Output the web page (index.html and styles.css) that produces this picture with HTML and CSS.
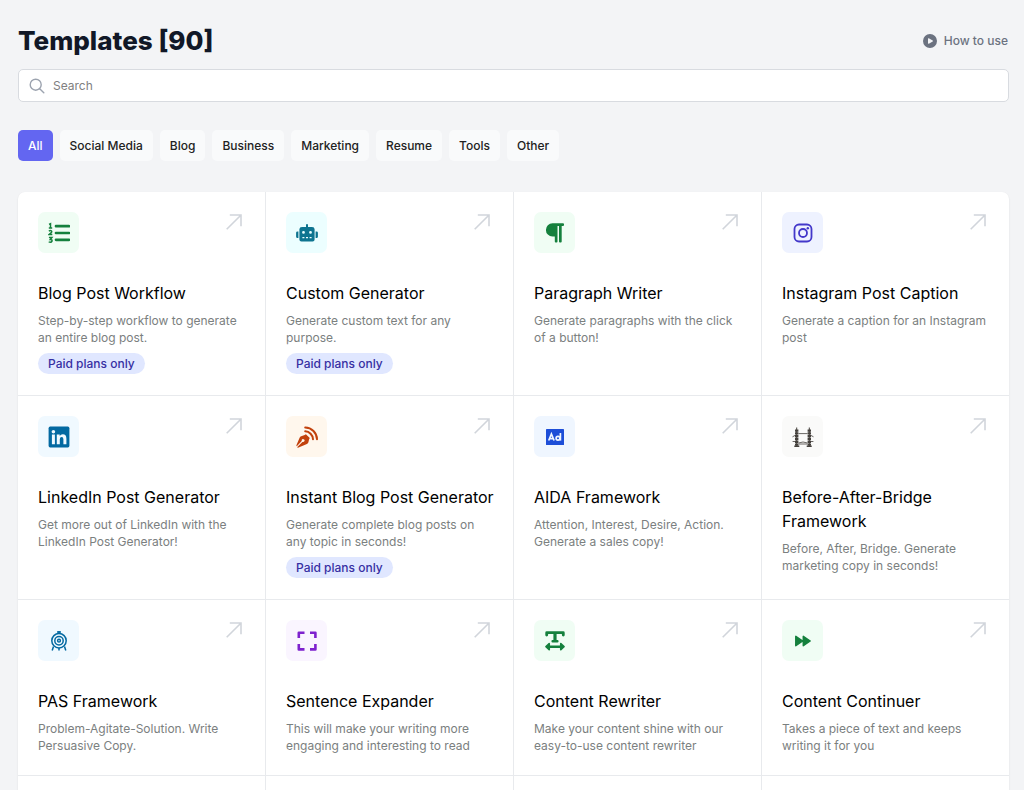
FILE: index.html
```html
<!DOCTYPE html>
<html lang="en">
<head>
<meta charset="utf-8">
<meta name="viewport" content="width=device-width, initial-scale=1">
<title>Templates</title>
<link rel="stylesheet" href="styles.css">
</head>
<body>
<svg class="defs" aria-hidden="true">
  <symbol id="arrow" viewBox="0 0 16 16"><path d="M0.7 15.3 14.8 1.2M3.8 1h11.2v11.2" fill="none" stroke="currentColor" stroke-width="1.6"/></symbol>
</svg>
<main class="page">
  <header class="header">
    <h1 class="heading">Templates [90]</h1>
    <a class="help" href="#"><svg class="help-icon" viewBox="0 0 14 14" aria-hidden="true"><path fill-rule="evenodd" fill="currentColor" d="M7 0a7 7 0 1 0 0 14A7 7 0 0 0 7 0ZM5.8 4.3 9.7 6.5q.7.5 0 1L5.8 9.7q-.8.3-.8-.6V4.9q0-.9.8-.6Z"/></svg>How to use</a>
  </header>
  <label class="search">
    <svg class="search-icon" viewBox="0 0 16 16" fill="none" stroke="currentColor" stroke-width="1.4" stroke-linecap="round" aria-hidden="true"><circle cx="6.7" cy="6.7" r="5.5"/><path d="m10.7 10.7 4.1 4.1"/></svg>
    <input class="search-input" type="search" placeholder="Search" aria-label="Search">
  </label>
  <nav class="tabs" aria-label="Categories">
    <button class="tab tab-active" type="button">All</button>
    <button class="tab" type="button">Social Media</button>
    <button class="tab" type="button">Blog</button>
    <button class="tab" type="button">Business</button>
    <button class="tab" type="button">Marketing</button>
    <button class="tab" type="button">Resume</button>
    <button class="tab" type="button">Tools</button>
    <button class="tab" type="button">Other</button>
  </nav>
  <section class="grid">
    <article class="card">
      <div class="card-top"><span class="tile green"><svg viewBox="0 0 22 22" fill="none" stroke="currentColor" aria-hidden="true"><path d="M8 4.200h13M8 11h13M8 17.800h13" stroke-width="2.700" stroke-linecap="round"/><path d="M1 2.400 2.500 1.700V6M.8 6.100h3.400M.9 9.300q1.200-1.200 2.500-.4.8.9-.4 1.900L1 12.600h3.300M.9 15.500h3L2.300 17.500q2 0 1.700 1.600-.7 1.700-3.300.8" stroke-width="1.500"/></svg></span><svg class="arrow" aria-hidden="true"><use href="#arrow"/></svg></div>
      <h2 class="title"><a href="#">Blog Post Workflow</a></h2>
      <p class="text">Step-by-step workflow to generate an entire blog post.</p>
      <span class="badge">Paid plans only</span>
    </article>
    <article class="card">
      <div class="card-top"><span class="tile cyan"><svg viewBox="0 0 22 22" fill="currentColor" aria-hidden="true"><path fill-rule="evenodd" d="M10 2.500q1-1 2 0V5h4Q18.600 5 18.600 7.200V17.500q0 2-2 2H5.400q-2 0-2-2V7.200Q3.400 5 6 5h4ZM7.500 9a1.400 1.400 0 1 0 0 2.800 1.400 1.400 0 0 0 0-2.800Zm7 0a1.400 1.400 0 1 0 0 2.800 1.400 1.400 0 0 0 0-2.800ZM6.400 15v1.200h2V15Zm3.600 0v1.200h2V15Zm3.600 0v1.200h2V15Z"/><path d="M2.400 9.500V16H1.500Q.1 16 .1 14.800v-4Q.1 9.500 1.500 9.500ZM19.600 9.500V16h.9q1.400 0 1.400-1.200v-4q0-1.300-1.400-1.300Z"/></svg></span><svg class="arrow" aria-hidden="true"><use href="#arrow"/></svg></div>
      <h2 class="title"><a href="#">Custom Generator</a></h2>
      <p class="text">Generate custom text for any purpose.</p>
      <span class="badge">Paid plans only</span>
    </article>
    <article class="card">
      <div class="card-top"><span class="tile green"><svg viewBox="0 0 22 22" fill="currentColor" aria-hidden="true"><path d="M8.500 1.300H19q1 0 1 1V3q0 1-1 1h-1.300v15.500q0 .9-.9.900h-.9q-.9 0-.9-.9V4h-1.500v15.500q0 .9-.9.900h-.9q-.9 0-.9-.9V14.500H8.500a6.600 6.600 0 0 1 0-13.200Z"/></svg></span><svg class="arrow" aria-hidden="true"><use href="#arrow"/></svg></div>
      <h2 class="title"><a href="#">Paragraph Writer</a></h2>
      <p class="text">Generate paragraphs with the click of a button!</p>
    </article>
    <article class="card">
      <div class="card-top"><span class="tile indigo"><svg viewBox="0 0 22 22" fill="none" stroke="currentColor" stroke-width="1.800" aria-hidden="true"><rect x="2.500" y="2.500" width="17" height="17" rx="4.500"/><circle cx="11" cy="11" r="4"/><circle cx="15.800" cy="6.200" r="1.200" fill="currentColor" stroke="none"/></svg></span><svg class="arrow" aria-hidden="true"><use href="#arrow"/></svg></div>
      <h2 class="title"><a href="#">Instagram Post Caption</a></h2>
      <p class="text">Generate a caption for an Instagram post</p>
    </article>
    <article class="card">
      <div class="card-top"><span class="tile sky"><svg viewBox="0 0 22 22" aria-hidden="true"><rect x=".6" y=".6" width="20.800" height="20.800" rx="1.600" fill="currentColor"/><g fill="#f0f9ff"><circle cx="5.400" cy="5.700" r="1.800"/><path d="M3.900 8.600h3v9.700h-3zM8.800 8.600h2.900v1.300q1-1.600 3.100-1.600 3.600 0 3.600 4.400v5.600h-3v-5q0-2.400-1.700-2.400-1.900 0-1.900 2.400v5h-3z"/></g></svg></span><svg class="arrow" aria-hidden="true"><use href="#arrow"/></svg></div>
      <h2 class="title"><a href="#">LinkedIn Post Generator</a></h2>
      <p class="text">Get more out of LinkedIn with the LinkedIn Post Generator!</p>
    </article>
    <article class="card">
      <div class="card-top"><span class="tile orange"><svg viewBox="0 0 22 22" aria-hidden="true"><path fill="currentColor" d="m8.700 9 1.200-.8 3.900 3.800-.7 1.200-.7 3.100q-.3 1.200-1.500 1.600L2 21.700l-.9-.5 5.300-5.300q1.900.5 2.300-1.300-.1-1.800-2-1.700-1.400.5-1 2L.8 20.200.3 19.600l3.200-7.700q.5-1.300 1.700-1.700Z"/><g fill="none" stroke="currentColor" stroke-width="2" stroke-linecap="round"><path d="M9.200 1.500A12 12 0 0 1 21 13.300M9.200 5.300A8.300 8.300 0 0 1 17 13.200"/></g></svg></span><svg class="arrow" aria-hidden="true"><use href="#arrow"/></svg></div>
      <h2 class="title"><a href="#">Instant Blog Post Generator</a></h2>
      <p class="text">Generate complete blog posts on any topic in seconds!</p>
      <span class="badge">Paid plans only</span>
    </article>
    <article class="card">
      <div class="card-top"><span class="tile blue"><svg viewBox="0 0 22 22" aria-hidden="true"><rect x="2" y="3" width="18" height="16" rx=".6" fill="currentColor"/><g fill="none" stroke="#eff6ff" stroke-width="1.700"><path d="m4.700 14.500 2.700-6.500 2.700 6.500M5.700 12.700h3.400"/><circle cx="14" cy="12.200" r="1.900"/><path d="M16.400 7v7.600"/></g></svg></span><svg class="arrow" aria-hidden="true"><use href="#arrow"/></svg></div>
      <h2 class="title"><a href="#">AIDA Framework</a></h2>
      <p class="text">Attention, Interest, Desire, Action. Generate a sales copy!</p>
    </article>
    <article class="card">
      <div class="card-top"><span class="tile stone"><svg viewBox="0 0 22 22" fill="none" stroke="currentColor" aria-hidden="true"><path d="M4.700 1.500V21M17.300 1.500V21" stroke-width="1"/><path d="M4.700 3.500v17M17.300 3.500v17" stroke-width="3.400" stroke-dasharray="2.300 .5"/><path d="M2.300 20.200h5M14.700 20.200h5" stroke-width="1.500"/><path d="M6.500 7.600h9M.5 10.800l3-1.600M21.500 10.800l-3-1.600M.6 15.500H3M19 15.500h2.400M6.500 17q4.500-2 9 0M6.500 18h9" stroke-width=".8"/></svg></span><svg class="arrow" aria-hidden="true"><use href="#arrow"/></svg></div>
      <h2 class="title"><a href="#">Before-After-Bridge Framework</a></h2>
      <p class="text">Before, After, Bridge. Generate marketing copy in seconds!</p>
    </article>
    <article class="card">
      <div class="card-top"><span class="tile sky"><svg viewBox="0 0 22 22" fill="none" stroke="currentColor" stroke-width="1.500" aria-hidden="true"><circle cx="11" cy="10.700" r="7.200"/><circle cx="11" cy="10.700" r="4.200"/><circle cx="11" cy="10.700" r="1.400"/><path d="M11 1v2.500M9 2h4M5.500 16.500l-1.300 4M16.500 16.500l1.300 4M11 18v2.500"/></svg></span><svg class="arrow" aria-hidden="true"><use href="#arrow"/></svg></div>
      <h2 class="title"><a href="#">PAS Framework</a></h2>
      <p class="text">Problem-Agitate-Solution. Write Persuasive Copy.</p>
    </article>
    <article class="card">
      <div class="card-top"><span class="tile purple"><svg viewBox="0 0 22 22" fill="none" stroke="currentColor" stroke-width="2.600" stroke-linejoin="round" aria-hidden="true"><path d="M2.800 8V2.800H8.500M14 2.800h5.400V8M2.800 14v5.400H8.500M14 19.400h5.400V14"/></svg></span><svg class="arrow" aria-hidden="true"><use href="#arrow"/></svg></div>
      <h2 class="title"><a href="#">Sentence Expander</a></h2>
      <p class="text">This will make your writing more engaging and interesting to read</p>
    </article>
    <article class="card">
      <div class="card-top"><span class="tile green"><svg viewBox="0 0 22 22" fill="none" stroke="currentColor" stroke-linejoin="round" aria-hidden="true"><path d="M2.700 5V2.700h16.600V5" stroke-width="2.800" stroke-linecap="round"/><path d="M11 3v8" stroke-width="3.200"/><path d="M8.600 11.200h4.800M5 16.700h12" stroke-width="2.400" stroke-linecap="round"/><path d="m5.200 13.700-3.200 3 3.200 3zM16.800 13.700l3.200 3-3.200 3z" fill="currentColor" stroke-width="1.700"/></svg></span><svg class="arrow" aria-hidden="true"><use href="#arrow"/></svg></div>
      <h2 class="title"><a href="#">Content Rewriter</a></h2>
      <p class="text">Make your content shine with our easy-to-use content rewriter</p>
    </article>
    <article class="card">
      <div class="card-top"><span class="tile green"><svg viewBox="0 0 22 22" fill="currentColor" stroke="currentColor" stroke-width="1.500" stroke-linejoin="round" aria-hidden="true"><path d="M3.800 6.300v9.400l6.900-4.700zM11.300 6.300v9.400l6.900-4.700z"/></svg></span><svg class="arrow" aria-hidden="true"><use href="#arrow"/></svg></div>
      <h2 class="title"><a href="#">Content Continuer</a></h2>
      <p class="text">Takes a piece of text and keeps writing it for you</p>
    </article>
    <article class="card"></article>
    <article class="card"></article>
    <article class="card"></article>
    <article class="card"></article>
  </section>
</main>
</body>
</html>
```

FILE: styles.css
```css
*, *::before, *::after { box-sizing: border-box; }
body {
  margin: 0;
  height: 100vh;
  overflow: hidden;
  background: #f3f4f6;
  color: #111827;
  font-family: Inter, "Liberation Sans", sans-serif;
  font-size: 12px;
}
.defs { display: none; }
.page { padding: 25px 15px 0 18px; }
.header { display: flex; align-items: center; justify-content: space-between; }
.heading { margin: 0; font-size: 26px; line-height: 31px; font-weight: 800; }
.help {
  display: flex;
  align-items: center;
  gap: 7px;
  padding-right: 1px;
  color: #6b7280;
  font-weight: 500;
  line-height: 17px;
  text-decoration: none;
}
.help-icon { width: 14px; height: 14px; }
.search {
  display: flex;
  align-items: center;
  gap: 8px;
  height: 33px;
  margin-top: 13px;
  padding: 0 10px;
  background: #fff;
  border: 1px solid #d8dbe0;
  border-radius: 5px;
}
.search-icon { flex: none; width: 16px; height: 16px; color: #9ca3af; }
.search-input {
  flex: 1;
  min-width: 0;
  padding: 0;
  border: 0;
  outline: 0;
  background: transparent;
  font: inherit;
  color: inherit;
}
.search-input::placeholder { color: #808080; opacity: 1; }
.tabs { display: flex; flex-wrap: wrap; gap: 7px; margin-top: 28px; }
.tab {
  height: 31px;
  padding: 0 10px;
  border: 0;
  border-radius: 5px;
  background: #f9fafb;
  color: #222;
  font: inherit;
  font-weight: 500;
}
.tab-active { background: #6366f1; color: #fff; }
.grid {
  display: grid;
  grid-template-columns: repeat(4, minmax(0, 1fr));
  gap: 1px;
  margin-top: 31px;
  background: #e8eaed;
  border-radius: 7px;
  overflow: hidden;
  box-shadow: 0 1px 2px rgba(0, 0, 0, 0.1);
}
.card { min-height: 80px; padding: 20px 16px 21px 20px; background: #fff; }
.card-top { display: flex; justify-content: space-between; }
.tile {
  display: flex;
  align-items: center;
  justify-content: center;
  width: 41px;
  height: 41px;
  border-radius: 7px;
}
.tile svg { width: 22px; height: 22px; }
.green { background: #f0fdf4; color: #15803d; }
.cyan { background: #ecfeff; color: #0e7490; }
.indigo { background: #eef2ff; color: #4338ca; }
.sky { background: #f0f9ff; color: #0369a1; }
.orange { background: #fff7ed; color: #c2410c; }
.blue { background: #eff6ff; color: #1d4ed8; }
.stone { background: #fafaf9; color: #44403c; }
.purple { background: #faf5ff; color: #7e22ce; }
.arrow { width: 16px; height: 16px; margin: 2px 7px 0 0; color: #d1d5db; }
.title { margin: 28px 0 0; font-size: 16px; line-height: 24px; font-weight: 400; }
.title a { color: #000; text-decoration: none; }
.text { margin: 7px 0 0; padding-right: 4px; line-height: 17px; color: #7b8080; }
.badge {
  display: block;
  width: fit-content;
  margin-top: 7px;
  padding: 0 10px;
  border-radius: 11px;
  background: #e0e7ff;
  color: #3730a3;
  font-weight: 500;
  line-height: 21px;
}
```
